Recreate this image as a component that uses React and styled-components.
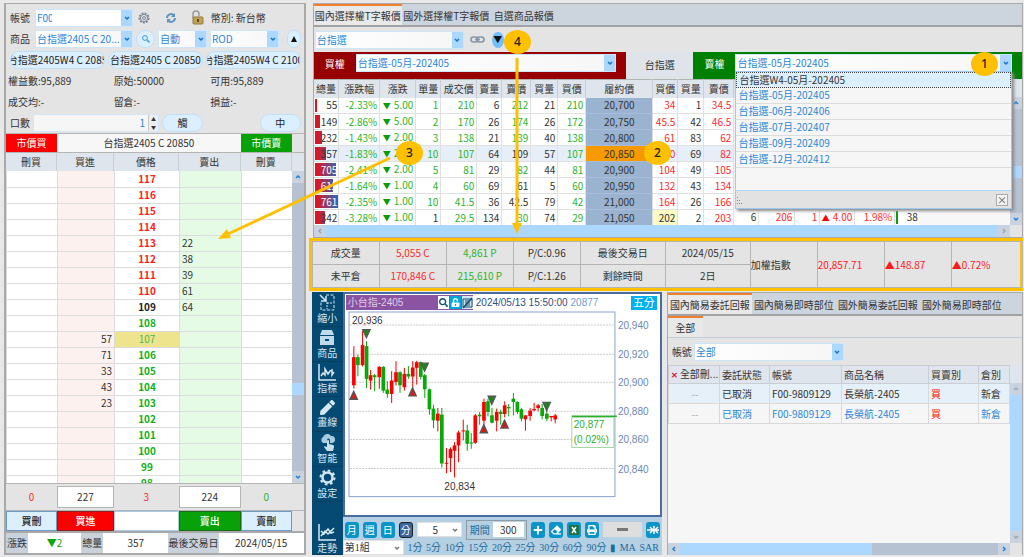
import React from "react";
import styled, { createGlobalStyle } from "styled-components";
import {
    FaSearch,
    FaPen,
    FaEraser,
    FaPrint,
    FaPlus,
    FaUnlockAlt,
} from "react-icons/fa";

const blue = "#2b86d9";
const red = "#ff2a2a";
const green = "#2bb52b";
const dark = "#333";

const GlobalStyle = createGlobalStyle`
  * {
    box-sizing: border-box;
  }

  body {
    margin: 0;
    background: #f3f3f3;
    color: ${dark};
    font-family: "Noto Sans CJK TC", "Noto Sans", sans-serif;
    font-size: 10px;
    line-height: 14px;
  }

  button, select, input {
    margin: 0;
    padding: 0;
    font: inherit;
    color: inherit;
    border-radius: 0;
  }

  table {
    width: 100%;
    border-collapse: collapse;
    table-layout: fixed;
  }

  th, td {
    padding: 0;
    font-weight: normal;
    white-space: nowrap;
    overflow: hidden;
  }
`;

const Page = styled.div`
  position: relative;
  display: grid;
  grid-template-columns: minmax(0, 30fr) minmax(0, 71fr);
  gap: 3px;
  min-height: 100vh;
  padding: 3px 1px 2px 4px;
  background: #e8e8e8;
  overflow: hidden;
`;

/* shared controls */

const ComboBox = styled.div`
  position: relative;
  display: flex;
  flex: ${(props) => props.$flex || "1"};
  min-width: 0;
  height: 18px;
  background: linear-gradient(90deg, #fff, #f6f6f6);
  border: 1px solid #cde6fb;
`;

const Select = styled.select`
  flex: 1;
  min-width: 0;
  padding-left: 1px;
  border: 0;
  outline: 0;
  appearance: none;
  background: transparent;
  color: ${blue};
  text-overflow: ellipsis;
`;

const ComboArrow = styled.span`
  display: flex;
  align-items: center;
  justify-content: center;
  width: 11px;
  background: #acd8ff;
  color: #1673cc;
  pointer-events: none;
`;

const Pill = styled.button`
  flex: ${(props) => props.$flex || "1"};
  min-width: 0;
  height: 18px;
  display: flex;
  align-items: center;
  justify-content: center;
  overflow: hidden;
  white-space: nowrap;
  border: 1px solid #bfe0fb;
  border-radius: 9px;
  background: #dcefff;
  color: #222;
`;

const IconButton = styled.button`
  flex: 0 0 16px;
  height: 16px;
  display: flex;
  align-items: center;
  justify-content: center;
  border: 0;
  background: none;
  color: ${(props) => props.$color || "#888"};
`;

const ScrollArrow = styled.button`
  flex: 0 0 12px;
  display: flex;
  align-items: center;
  justify-content: center;
  border: 0;
  background: #c9d3df;
  color: ${(props) => (props.$off ? "#9aa5b3" : "#1c7fd8")};
`;

const ScrollBar = styled.div`
  display: flex;
  flex-direction: ${(props) => (props.$vertical ? "column" : "row")};
  background: #b6c2d1;
  ${(props) => (props.$vertical ? "width: 12px;" : "height: 12px;")}
`;

const Thumb = styled.span`
  flex: ${(props) => props.$flex || "0 0 12px"};
  background: #acd8ff;
`;

const Track = styled.span`
  flex: ${(props) => props.$flex || "1"};
  background: ${(props) => props.$bg || "transparent"};
`;

const Chevron = ({ dir = "down" }) => {
    const points = {
        down: "1,2 3,4 5,2",
        up: "1,4 3,2 5,4",
        left: "4,1 2,3 4,5",
        right: "2,1 4,3 2,5",
    };
    return (
        <svg width="6" height="6" viewBox="0 0 6 6" fill="none" stroke="currentColor" strokeWidth="1.5">
            <polyline points={points[dir]} />
        </svg>
    );
};

const Combo = ({ id, label, value, flex, children }) => (
    <ComboBox $flex={flex}>
        <Select id={id} aria-label={label} defaultValue={value}>
            <option>{value}</option>
        </Select>
        <ComboArrow>
            <Chevron />
        </ComboArrow>
        {children}
    </ComboBox>
);

/* order ticket */

const Ticket = styled.section`
  display: flex;
  flex-direction: column;
  min-width: 0;
  padding-top: 3px;
  border: 2px solid #a9a9a9;
  border-top-width: 1px;
  background: #e4e4e4;
`;

const FormRow = styled.div`
  display: flex;
  align-items: center;
  gap: ${(props) => props.$gap || "3px"};
  height: 21px;
  padding: 0 3px 0 4px;
`;

const FormLabel = styled.label`
  flex: 0 0 22px;
  white-space: nowrap;
`;

const Currency = styled.span`
  flex: 0 0 92px;
  padding-left: 2px;
`;

const Account = styled.div`
  display: flex;
  flex: 0 0 98px;
`;

const AccountMask = styled.span`
  position: absolute;
  top: 0;
  bottom: 0;
  left: 16px;
  right: 11px;
  background: #fff;
`;

const Facts = styled.div`
  display: grid;
  grid-template-columns: 35fr 32fr 31fr;
  align-items: center;
  height: 21px;
  padding-left: 2px;
`;

const SpinBox = styled.div`
  display: flex;
  flex: 0 0 84px;
  height: 18px;
  border: 1px solid #d4e6f5;
  background: #f6f6f6;
`;

const SpinInput = styled.input`
  flex: 1;
  min-width: 0;
  padding-right: 3px;
  border: 0;
  background: transparent;
  color: ${blue};
  text-align: right;
`;

const SpinArrows = styled.span`
  display: grid;
  width: 10px;
  font-size: 5px;
  line-height: 8px;
  text-align: center;
  border-left: 1px solid #c8c8c8;
  background: #eee;
`;

const Spacer = styled.span`
  flex: 1;
`;

const LadderGrid = styled.div`
  display: grid;
  grid-template-columns: 51fr 57fr 65fr 62fr 51fr 12px;
  background: ${(props) => props.$bg || "transparent"};
  border-top: 1px solid #b5b5b5;
`;

const MarketButton = styled.button`
  height: 18px;
  border: 0;
  background: ${(props) => props.$bg};
  color: #fff;
`;

const ContractName = styled.div`
  grid-column: 2 / 5;
  line-height: 18px;
  text-align: center;
  background: #f7f7f7;
`;

const LadderHead = styled.div`
  line-height: 18px;
  text-align: center;
  background: #dfe5ec;
  border-right: 1px solid #c9ced6;
`;

const LadderBody = styled.div`
  display: flex;
  flex: 1 1 0;
  min-height: 0;
  overflow: hidden;
`;

const LadderScroll = styled.div`
  flex: 1;
  min-width: 0;
  overflow: hidden;
`;

const LadderTable = styled.table`
  td {
    height: 16px;
    border: 1px solid #dcdcdc;
    border-top: 0;
    background: #fff;
  }
`;

const BidCell = styled.td`
  && {
    padding-right: 2px;
    text-align: right;
    background: #fdf1f0;
  }
`;

const PriceCell = styled.td`
  && {
    text-align: center;
    font-weight: ${(props) => (props.$last ? "normal" : "bold")};
    color: ${(props) => props.$color};
    background: ${(props) => (props.$last ? "#eee48e" : "#fff")};
  }
`;

const AskCell = styled.td`
  && {
    padding-left: 2px;
    background: #e6fbe6;
  }
`;

const SumCell = styled.div`
  margin: 2px 0;
  line-height: 20px;
  text-align: center;
  color: ${(props) => props.$color || dark};
  background: ${(props) => (props.$box ? "#fff" : "transparent")};
  border: 1px solid ${(props) => (props.$box ? "#b5b5b5" : "transparent")};
`;

const TradeButton = styled.button`
  height: 20px;
  border: 1px solid ${(props) => props.$edge || "#6d9ac4"};
  background: ${(props) => props.$bg || "#dcefff"};
  color: ${(props) => props.$color || "#222"};
  font-weight: 500;
`;

const InfoBar = styled.div`
  display: grid;
  grid-template-columns: 22fr 53fr 22fr 65fr 50fr 85fr;
  text-align: center;
  line-height: 20px;
  border-top: 2px solid #a9a9a9;
`;

const InfoName = styled.span`
  white-space: nowrap;
  background: #c9d1db;
`;

const InfoValue = styled.span`
  background: #fff;
  color: ${(props) => props.$color || dark};
`;

/* option quotes */

const RightSide = styled.main`
  display: flex;
  flex-direction: column;
  min-width: 0;
`;

const QuotePanel = styled.section`
  margin-left: 4px;
  border: 1px solid #aaa;
  background: #e4e4e4;
`;

const TabBar = styled.nav`
  display: flex;
  height: 23px;
  background: #ccd4de;
  border-bottom: 2px solid #a3a3a3;
`;

const Tab = styled.button`
  padding: 0 1px;
  white-space: nowrap;
  border: 0;
  border-top: 2px solid ${(props) => (props.$active ? "#f08030" : "transparent")};
  background: ${(props) => (props.$active ? "#e9e9e9" : "transparent")};
  ${(props) => props.$fixed && `width: ${props.$fixed}; flex: none;`}
`;

const Toolbar = styled.div`
  display: flex;
  align-items: center;
  gap: 6px;
  height: 25px;
  padding-left: 1px;
`;

const ToolCombo = styled.div`
  display: flex;
  flex: 0 0 149px;
`;

const FoldButton = styled.button`
  width: 12px;
  height: 16px;
  border: 0;
  border-radius: 50%;
  background: #74bdff;
  color: #111;
  font-size: 9px;
  line-height: 12px;
`;

const SideBar = styled.div`
  display: grid;
  grid-template-columns: 312fr 67fr 328fr;
  height: 25px;
`;

const SideBlock = styled.div`
  display: flex;
  gap: 11px;
  padding: 2px 10px 5px 11px;
  background: ${(props) => props.$bg};
  color: #fff;
`;

const SideLabel = styled.label`
  line-height: 20px;
`;

const Underlying = styled.div`
  line-height: 25px;
  text-align: center;
  background: #dfe3ea;
`;

const Menu = styled.ul`
  position: absolute;
  z-index: 3;
  top: 100%;
  left: -1px;
  right: -1px;
  height: 138px;
  display: flex;
  flex-direction: column;
  margin: 0;
  padding: 0;
  list-style: none;
  background: #f6f6f6;
  border: 1px solid #9ccaf0;
  box-shadow: 2px 2px 3px #888;
`;

const MenuItem = styled.li`
  height: 16px;
  padding-left: 2px;
  color: ${(props) => (props.$active ? dark : blue)};
  background: ${(props) => (props.$active ? "#dcefff" : "transparent")};
  border: ${(props) => (props.$active ? "1px dotted #444" : "0 solid #ddd")};
  border-bottom-width: 1px;
`;

const MenuFoot = styled.li`
  display: flex;
  justify-content: space-between;
  align-items: center;
  height: 18px;
  margin-top: auto;
  padding-right: 3px;
  background: #e2e2e2;
  border-top: 1px solid #acd8ff;
`;

const CloseButton = styled.button`
  width: 12px;
  height: 12px;
  border: 1px solid #aaa;
  background: #f4f4f4;
  color: #555;
  line-height: 9px;
`;

const QuoteBody = styled.div`
  display: flex;
  margin-top: 2px;
`;

const QuoteClip = styled.div`
  flex: 1;
  min-width: 0;
  height: 146px;
  overflow: hidden;
  background: #f7f7f7;
`;

const QuoteTable = styled.table`
  th {
    height: 18px;
    background: #dfe5ec;
    border-right: 1px solid #c9ced6;
    border-top: 1px solid #b5b5b5;
  }
`;

const QuoteRow = styled.tr`
  background: ${(props) => (props.$active ? "#e6eff8" : "#fff")};
`;

const Td = styled.td`
  height: 16px;
  padding-right: 2px;
  text-align: right;
  color: ${(props) => props.$color || dark};
  background: ${(props) => props.$bg || "transparent"};
  border: 1px solid #e0e0e0;
  border-top: 0;
`;

const StrikeTd = styled.td`
  height: 16px;
  text-align: center;
  background: ${(props) => (props.$active ? "#f79a00" : "#9ab3d1")};
  border-bottom: 1px solid #a9bdd6;
`;

const BlankTd = styled.td`
  background: #f7f7f7;
`;

const VolumeTd = styled.td`
  position: relative;
  height: 16px;
  padding-right: 1px;
  text-align: right;
  border-bottom: 1px solid #e0e0e0;
`;

const VolumeBar = styled.span`
  position: absolute;
  top: 1px;
  bottom: 1px;
  left: 1px;
  background: ${(props) => props.$bg || "linear-gradient(90deg, #ec0f14, #1f6cc8) 0 0 / 24px 100%"};
`;

const VolumeText = styled.span`
  position: relative;
  color: ${(props) => (props.$light ? "#fff" : dark)};
`;

const Arrow = styled.span`
  margin-right: 3px;
  font-size: 8px;
  color: ${(props) => props.$color};
`;

/* summary */

const Summary = styled.section`
  border: 3px solid #ffc000;
  background: #e4e4e4;
`;

const SummaryTable = styled.table`
  td {
    height: 23px;
    text-align: center;
    border: 1px solid #b5b5b5;
  }

  td[rowspan] {
    text-align: left;
  }
`;

const Tint = styled.span`
  color: ${(props) => props.$color};
`;

/* bottom area */

const Bottom = styled.div`
  display: grid;
  grid-template-columns: minmax(0, 350fr) minmax(0, 356fr);
  flex: 1;
  gap: 5px;
  margin: 1px 0 0 3px;
`;

const ChartPanel = styled.section`
  display: flex;
  min-width: 0;
  background: #b4d0e2;
`;

const SideNav = styled.nav`
  flex: 0 0 31px;
  display: flex;
  flex-direction: column;
  background: #044a72;
`;

const NavButton = styled.button`
  height: ${(props) => (props.$last ? "32px" : "35px")};
  margin-top: ${(props) => (props.$last ? "auto" : "0")};
  display: flex;
  flex-direction: column;
  align-items: center;
  justify-content: center;
  gap: 1px;
  border: 0;
  border-bottom: 1px solid #0a3f60;
  background: none;
  color: #d5e8f5;
  font-size: 10px;
  line-height: 12px;
`;

const ChartMain = styled.div`
  flex: 1;
  display: flex;
  flex-direction: column;
  min-width: 0;
`;

const ChartFrame = styled.div`
  flex: 1;
  border: 2px solid #4c6ba5;
  background: #fff;
  font-family: "Liberation Sans", "Noto Sans CJK TC", sans-serif;
`;

const ChartHead = styled.div`
  display: flex;
  align-items: center;
  height: 17px;
  gap: 3px;
  padding: 0 1px;
  color: #2c4f86;
`;

const ChartTitle = styled.div`
  flex: 0 0 127px;
  display: flex;
  align-items: center;
  gap: 1px;
  height: 15px;
  padding-left: 2px;
  background: #8a54a2;
  color: #e0cfe8;
`;

const TitleText = styled.span`
  flex: 1;
`;

const TitleIcon = styled.button`
  width: 11px;
  height: 13px;
  display: flex;
  align-items: center;
  justify-content: center;
  border: 0;
  background: ${(props) => props.$bg || "#fff"};
  color: ${(props) => props.$color || "#0b4f78"};
  font-size: 9px;
`;

const Period = styled.span`
  margin-left: auto;
  margin-right: 2px;
  padding: 0 2px;
  line-height: 14px;
  font-size: 11px;
  background: #00b0f0;
  color: #fff;
`;

const ChartSvg = styled.svg`
  display: block;
  width: 100%;
`;

const ChartTools = styled.div`
  display: flex;
  align-items: center;
  gap: 4px;
  height: 21px;
  margin-top: 2px;
  padding: 0 2px;
`;

const ToolButton = styled.button`
  flex: 0 0 14px;
  height: 16px;
  display: flex;
  align-items: center;
  justify-content: center;
  border: ${(props) => (props.$active ? "1px solid #222" : "0")};
  border-radius: 3px;
  background: ${(props) => (props.$active ? "#38669f" : "#0c94c9")};
  color: #fff;
  font-size: 10px;
`;

const PlainCombo = styled.div`
  display: flex;
  align-items: center;
  flex: 0 0 ${(props) => props.$width};
  height: 15px;
  padding-right: 3px;
  background: #fff;
  border: 1px solid #e0e0e0;
  color: #777;
`;

const PlainSelect = styled(Select)`
  color: ${dark};
  text-align: ${(props) => (props.$center ? "center" : "left")};
`;

const Duration = styled.label`
  display: flex;
  align-items: center;
  justify-content: space-between;
  flex: 0 0 61px;
  height: 20px;
  padding: 0 2px 0 3px;
  border: 1px solid #8f9aa5;
  color: #2a6a96;
`;

const DurationInput = styled.input`
  width: 31px;
  height: 15px;
  border: 0;
  background: #fff;
  color: ${dark};
  text-align: center;
`;

const SliderBox = styled.div`
  flex: 1;
  display: flex;
  align-items: center;
  justify-content: center;
  height: 15px;
  background: #dedede;
`;

const SliderGrip = styled.span`
  width: 11px;
  height: 3px;
  background: #777;
`;

const MinuteBar = styled.div`
  display: flex;
  align-items: center;
  justify-content: space-between;
  height: 15px;
  padding-right: 3px;
  color: #206a9c;
  font-family: "Liberation Serif", "Noto Sans CJK TC", serif;
`;

const MinuteButton = styled.button`
  border: 0;
  background: none;
  white-space: nowrap;
`;

/* order report */

const OrderPanel = styled.section`
  display: flex;
  flex-direction: column;
  min-width: 0;
  border: 1px solid #aaa;
  border-bottom: 0;
  background: #e4e4e4;
`;

const SubTabs = styled.div`
  height: 22px;
  display: flex;
  border-bottom: 1px solid #c3ccd6;
`;

const OrderFilter = styled.div`
  display: flex;
  align-items: center;
  gap: 2px;
  height: 27px;
  padding-left: 4px;
`;

const FilterCombo = styled.div`
  display: flex;
  flex: 0 0 150px;
`;

const OrderBody = styled.div`
  flex: 1;
  display: flex;
  background: #f6f6f6;
`;

const OrderTable = styled.table`
  th {
    height: 18px;
    padding-left: 2px;
    text-align: left;
    background: #dfe5ec;
    border: 1px solid #c9ced6;
  }

  td {
    height: 20px;
    padding-left: 2px;
    border: 1px solid #d9d9d9;
  }
`;

const OrderRow = styled.tr`
  color: ${(props) => (props.$active ? dark : blue)};
  background: ${(props) => (props.$active ? "#e6f0f9" : "#f6f6f6")};
`;

const CancelButton = styled.button`
  width: 100%;
  border: 0;
  background: none;
  color: #aaa;
`;

const Cross = styled.span`
  margin-right: 2px;
  font-size: 8px;
  font-weight: bold;
  color: #e0103a;
`;

/* callouts */

const Callouts = styled.svg`
  position: absolute;
  z-index: 4;
  top: 0;
  left: 0;
  width: 100%;
  height: 100%;
  pointer-events: none;
`;

const Badge = styled.span`
  position: absolute;
  z-index: 5;
  top: ${(props) => props.$y}px;
  left: ${(props) => props.$x}px;
  width: 27px;
  height: 24px;
  border-radius: 50%;
  background: #ffc000;
  color: #222;
  font-family: "Noto Sans", sans-serif;
  font-size: 12px;
  font-weight: 500;
  line-height: 24px;
  text-align: center;
`;

const asks = { 113: 22, 112: 38, 111: 39, 110: 61, 109: 64 };
const bids = { 107: 57, 106: 71, 105: 33, 104: 43, 103: 23 };
const prices = Array.from({ length: 20 }, (_, i) => 117 - i);

const priceColor = (price) => {
    if (price === 107) return "#4db848";
    if (price === 109) return "#222";
    return price > 109 ? "#ff2020" : "#12b012";
};

const Ladder = () => (
    <LadderTable aria-label="價格">
        <colgroup>
            <col width="51" />
            <col width="57" />
            <col width="65" />
            <col width="62" />
            <col width="51" />
        </colgroup>
        <tbody>
            {prices.map((price) => (
                <tr key={price}>
                    <td />
                    <BidCell>{bids[price]}</BidCell>
                    <PriceCell $last={price === 107} $color={priceColor(price)}>
                        {price}
                    </PriceCell>
                    <AskCell>{asks[price]}</AskCell>
                    <td />
                </tr>
            ))}
        </tbody>
    </LadderTable>
);

const OrderTicket = () => (
    <Ticket>
        <FormRow>
            <FormLabel htmlFor="account">帳號</FormLabel>
            <Account>
                <Combo id="account" value="F00">
                    <AccountMask />
                </Combo>
            </Account>
            <IconButton aria-label="設定" $color="#7d8a99">
                <svg width="12" height="12" viewBox="0 0 12 12" fill="none" stroke="currentColor">
                    <circle cx="6" cy="6" r="4.6" strokeWidth="1.8" strokeDasharray="2 1.1" />
                    <circle cx="6" cy="6" r="3.6" />
                    <circle cx="6" cy="6" r="1.5" />
                </svg>
            </IconButton>
            <Spacer />
            <IconButton aria-label="更新" $color="#5b93c7">
                <svg width="12" height="12" viewBox="0 0 12 12" fill="none" stroke="currentColor" strokeWidth="2">
                    <path d="M2 6a4 4 0 0 1 7-2.5M10 6a4 4 0 0 1-7 2.5" />
                    <path d="M10 1v4H6zM2 11V7h4z" fill="currentColor" stroke="none" />
                </svg>
            </IconButton>
            <Spacer />
            <IconButton aria-label="鎖定">
                <svg width="13" height="15" viewBox="0 0 13 15">
                    <path d="M2 8V4a3 3 0 0 1 6 0v2" fill="none" stroke="#999" strokeWidth="1.5" />
                    <rect x="2" y="7" width="10" height="7" rx="1" fill="#c2a35c" stroke="#94793b" />
                    <rect x="6" y="9" width="2" height="3" fill="#5e4b1d" />
                </svg>
            </IconButton>
            <Currency>幣別: 新台幣</Currency>
        </FormRow>
        <FormRow>
            <FormLabel htmlFor="product">商品</FormLabel>
            <Combo id="product" value="台指選2405 C 20..." flex="0 0 98px" />
            <Pill $flex="0 0 19px" aria-label="搜尋">
                <svg width="8" height="8" viewBox="0 0 8 8" fill="none" stroke="#3b97e0">
                    <circle cx="3" cy="3" r="2.4" />
                    <path d="M5 5l2.5 2.5" strokeWidth="1.4" />
                </svg>
            </Pill>
            <Combo label="自動" value="自動" flex="0 0 49px" />
            <Combo label="委託條件" value="ROD" flex="0 0 69px" />
            <Spacer />
            <Pill $flex="0 0 14px" aria-label="收合">
                <svg width="8" height="8" viewBox="0 0 8 8" fill="#111">
                    <path d="M4 1l3 6H1z" />
                </svg>
            </Pill>
        </FormRow>
        <FormRow>
            <Pill>台指選2405W4 C 2085</Pill>
            <Pill>台指選2405 C 20850</Pill>
            <Pill>台指選2405W4 C 2100</Pill>
        </FormRow>
        <Facts>
            <span>權益數:95,889</span>
            <span>原始:50000</span>
            <span>可用:95,889</span>
        </Facts>
        <Facts>
            <span>成交均:-</span>
            <span>留倉:-</span>
            <span>損益:-</span>
        </Facts>
        <FormRow>
            <label htmlFor="lots">口數</label>
            <SpinBox>
                <SpinInput id="lots" defaultValue="1" />
                <SpinArrows>
                    <span>▲</span>
                    <span>▼</span>
                </SpinArrows>
            </SpinBox>
            <Pill $flex="0 0 41px">觸</Pill>
            <Spacer />
            <Pill $flex="0 0 41px">中</Pill>
        </FormRow>
        <LadderGrid>
            <MarketButton $bg="#fb0000">市價買</MarketButton>
            <ContractName>台指選2405 C 20850</ContractName>
            <MarketButton $bg="#08a208">市價賣</MarketButton>
        </LadderGrid>
        <LadderGrid $bg="#dfe5ec">
            <LadderHead>刪買</LadderHead>
            <LadderHead>買進</LadderHead>
            <LadderHead>價格</LadderHead>
            <LadderHead>賣出</LadderHead>
            <LadderHead>刪賣</LadderHead>
        </LadderGrid>
        <LadderBody>
            <LadderScroll>
                <Ladder />
            </LadderScroll>
            <ScrollBar $vertical>
                <ScrollArrow aria-label="上"><Chevron dir="up" /></ScrollArrow>
                <Track $flex="200" />
                <Thumb />
                <Track $flex="76" />
                <ScrollArrow aria-label="下"><Chevron /></ScrollArrow>
            </ScrollBar>
        </LadderBody>
        <LadderGrid>
            <SumCell $color={red}>0</SumCell>
            <SumCell $box>227</SumCell>
            <SumCell $color={red}>3</SumCell>
            <SumCell $box>224</SumCell>
            <SumCell $color={green}>0</SumCell>
        </LadderGrid>
        <LadderGrid>
            <TradeButton>買刪</TradeButton>
            <TradeButton $bg="#fb0000" $color="#fff" $edge="#8a2020">買進</TradeButton>
            <TradeButton $bg="#fff" $edge="#a9cbe8" aria-label="價格" />
            <TradeButton $bg="#08a208" $color="#fff" $edge="#1c6a1c">賣出</TradeButton>
            <TradeButton>賣刪</TradeButton>
        </LadderGrid>
        <InfoBar>
            <InfoName>漲跌</InfoName>
            <InfoValue $color="#12a512">▼2</InfoValue>
            <InfoName>總量</InfoName>
            <InfoValue>357</InfoValue>
            <InfoName>最後交易日</InfoName>
            <InfoValue>2024/05/15</InfoValue>
        </InfoBar>
    </Ticket>
);

// the columns past the put ask lie under the open month list
const quoteHead = [
    ["總量", 25], ["漲跌幅", 41], ["漲跌", 36], ["單量", 25], ["成交價", 36],
    ["賣量", 25], ["賣價", 29], ["買量", 27], ["買價", 28], ["履約價", 67],
    ["買價", 25], ["買量", 26], ["賣價", 30], ["", 25], ["", 36],
    ["", 25], ["", 35], ["", 40], ["", 24],
];

// volume, bar, change %, change, lot, last, ask size, ask, bid size, bid, strike, put bid, size, ask
const quotes = [
    [55, 2, "-2.33%", "5.00", 1, "210", 6, "212", 21, "210", "20,700", "34", 1, "34.5"],
    [149, 5, "-2.86%", "5.00", 2, "170", 26, "174", 26, "172", "20,750", "45.5", 42, "46.5"],
    [232, 7, "-1.43%", "2.00", 3, "138", 21, "139", 40, "138", "20,800", "61", 83, "62"],
    [357, 11, "-1.83%", "2.00", 10, "107", 64, "109", 57, "107", "20,850", "80", 69, "82"],
    [705, 21, "-2.41%", "2.00", 5, "81", 29, "82", 44, "81", "20,900", "104", 49, "105"],
    [612, 18, "-1.64%", "1.00", 4, "60", 69, "61", 5, "60", "20,950", "132", 43, "134"],
    [761, 23, "-2.35%", "1.00", 10, "41.5", 36, "42.5", 79, "42", "21,000", "164", 26, "166"],
    [342, 10, "-3.28%", "1.00", 1, "29.5", 134, "30", 74, "29", "21,050", "202", 2, "203"],
];

const darkAsks = ["109", "61", "42.5"];

const QuoteLine = ({ item }) => {
    const [vol, bar, pct, chg, lot, last, askSize, ask, bidSize, bid, strike, putBid, putSize, putAsk] = item;
    const active = strike === "20,850";
    const edge = strike === "21,050";

    return (
        <QuoteRow $active={active}>
            <VolumeTd>
                <VolumeBar style={{ width: bar }} />
                <VolumeText $light={bar > 15}>{vol}</VolumeText>
            </VolumeTd>
            <Td $color={green}>{pct}</Td>
            <Td $color={green}>
                <Arrow $color="#089c08">▼</Arrow>
                {chg}
            </Td>
            <Td $color={edge ? dark : green}>{lot}</Td>
            <Td $color={green}>{last}</Td>
            <Td>{askSize}</Td>
            <Td $color={darkAsks.includes(ask) ? dark : green}>{ask}</Td>
            <Td>{bidSize}</Td>
            <Td $color={green}>{bid}</Td>
            <StrikeTd $active={active}>{strike}</StrikeTd>
            <Td $color={edge ? dark : red} $bg={edge && "#fbfbc4"}>{putBid}</Td>
            <Td>{putSize}</Td>
            <Td $color={red}>{putAsk}</Td>
            {edge ? (
                <>
                    <Td>6</Td>
                    <Td $color={red}>206</Td>
                    <Td $color={red}>1</Td>
                    <Td $color={red}>
                        <Arrow $color="#ff0000">▲</Arrow>
                        4.00
                    </Td>
                    <Td $color={red}>1.98%</Td>
                    <VolumeTd>
                        <VolumeBar $bg="#0c9c0c" style={{ width: 2 }} />
                        38
                    </VolumeTd>
                    <BlankTd />
                </>
            ) : (
                <BlankTd colSpan="7" />
            )}
        </QuoteRow>
    );
};

const months = [
    "台指選W4-05月-202405",
    "台指選-05月-202405",
    "台指選-06月-202406",
    "台指選-07月-202407",
    "台指選-09月-202409",
    "台指選-12月-202412",
];

const OptionQuotes = () => (
    <QuotePanel>
        <TabBar>
            <Tab $active $fixed="88px">國內選擇權T字報價</Tab>
            <Tab $fixed="89px">國外選擇權T字報價</Tab>
            <Tab $fixed="66px">自選商品報價</Tab>
        </TabBar>
        <Toolbar>
            <ToolCombo>
                <Combo label="商品" value="台指選" />
            </ToolCombo>
            <IconButton aria-label="連結" $color="#8596a8">
                <svg width="15" height="9" viewBox="0 0 15 9" fill="none" stroke="currentColor" strokeWidth="1.6">
                    <rect x="1" y="2" width="7" height="5" rx="2.5" />
                    <rect x="7" y="2" width="7" height="5" rx="2.5" />
                    <path d="M5 4.5h5" />
                </svg>
            </IconButton>
            <FoldButton aria-label="展開">▼</FoldButton>
        </Toolbar>
        <SideBar>
            <SideBlock $bg="#960000">
                <SideLabel htmlFor="call">買權</SideLabel>
                <Combo id="call" value="台指選-05月-202405" />
            </SideBlock>
            <Underlying>台指選</Underlying>
            <SideBlock $bg="#008000">
                <SideLabel htmlFor="put">賣權</SideLabel>
                <Combo id="put" value="台指選-05月-202405">
                    <Menu role="listbox" aria-label="月份">
                        {months.map((month, i) => (
                            <MenuItem key={month} role="option" $active={i === 0}>
                                {month}
                            </MenuItem>
                        ))}
                        <MenuFoot>
                            <svg width="8" height="10" viewBox="0 0 8 10" fill="#888">
                                <path d="M1 2h1v1H1zM1 5h1v1H1zM3 5h1v1H3zM1 8h1v1H1zM3 8h1v1H3zM5 8h1v1H5z" />
                            </svg>
                            <CloseButton aria-label="關閉">×</CloseButton>
                        </MenuFoot>
                    </Menu>
                </Combo>
            </SideBlock>
        </SideBar>
        <QuoteBody>
            <QuoteClip>
                <QuoteTable>
                    <colgroup>
                        {quoteHead.map(([, width], i) => (
                            <col key={i} width={width} />
                        ))}
                        <col />
                    </colgroup>
                    <thead>
                        <tr>
                            {quoteHead.map(([name], i) => (
                                <th key={i}>{name}</th>
                            ))}
                            <th />
                        </tr>
                    </thead>
                    <tbody>
                        {quotes.map((item) => (
                            <QuoteLine key={item[10]} item={item} />
                        ))}
                    </tbody>
                </QuoteTable>
            </QuoteClip>
            <ScrollBar $vertical>
                <Track $flex="0 0 18px" $bg="#dfe5ec" />
                <ScrollArrow aria-label="上"><Chevron dir="up" /></ScrollArrow>
                <Track $flex="56" />
                <Thumb />
                <Track $flex="34" />
                <ScrollArrow aria-label="下"><Chevron /></ScrollArrow>
            </ScrollBar>
        </QuoteBody>
        <ScrollBar>
            <ScrollArrow $off aria-label="左"><Chevron dir="left" /></ScrollArrow>
            <Thumb $flex="1" />
            <ScrollArrow $off aria-label="右"><Chevron dir="right" /></ScrollArrow>
            <Track $flex="0 0 12px" $bg="#e4e4e4" />
        </ScrollBar>
    </QuotePanel>
);

const MarketSummary = () => (
    <Summary>
        <SummaryTable>
            <colgroup>
                {[67, 67, 67, 67, 85, 85, 67, 67, 67, 71].map((width, i) => (
                    <col key={i} width={width} />
                ))}
            </colgroup>
            <tbody>
                <tr>
                    <td>成交量</td>
                    <td><Tint $color={red}>5,055 C</Tint></td>
                    <td><Tint $color={green}>4,861 P</Tint></td>
                    <td>P/C:0.96</td>
                    <td>最後交易日</td>
                    <td>2024/05/15</td>
                    <td rowSpan="2">加權指數</td>
                    <td rowSpan="2"><Tint $color="#ff1a1a">20,857.71</Tint></td>
                    <td rowSpan="2"><Tint $color="#ff1a1a">▲148.87</Tint></td>
                    <td rowSpan="2"><Tint $color="#ff1a1a">▲0.72%</Tint></td>
                </tr>
                <tr>
                    <td>未平倉</td>
                    <td><Tint $color={red}>170,846 C</Tint></td>
                    <td><Tint $color={green}>215,610 P</Tint></td>
                    <td>P/C:1.26</td>
                    <td>剩餘時間</td>
                    <td>2日</td>
                </tr>
            </tbody>
        </SummaryTable>
    </Summary>
);

// x, high, open/close top, open/close bottom, low, direction
const candles = [
    [140, 165, 198, 282, 292, 1], [152, 190, 198, 222, 255, 0], [166, 120, 162, 222, 226, 1],
    [178, 150, 165, 263, 290, 0], [190, 236, 252, 268, 295, 1], [202, 248, 252, 258, 300, 0],
    [216, 225, 227, 258, 293, 1], [228, 225, 227, 298, 305, 0], [240, 270, 295, 308, 320, 0],
    [253, 240, 268, 308, 335, 1], [266, 210, 243, 272, 283, 1], [278, 240, 243, 282, 305, 0],
    [291, 230, 248, 288, 298, 1], [303, 225, 248, 256, 263, 0], [316, 210, 229, 256, 290, 1],
    [328, 209, 213, 230, 280, 1], [340, 211, 213, 257, 265, 0], [352, 248, 252, 294, 320, 0],
    [366, 292, 294, 354, 370, 0], [378, 340, 352, 387, 410, 0], [391, 350, 367, 388, 420, 1],
    [403, 350, 370, 516, 528, 0], [417, 470, 514, 517, 545, 1], [429, 468, 473, 500, 542, 1],
    [441, 452, 462, 478, 558, 1], [453, 418, 423, 462, 512, 1], [467, 385, 417, 420, 447, 1],
    [479, 400, 417, 457, 478, 0], [491, 425, 453, 456, 472, 0], [503, 368, 372, 454, 458, 1],
    [516, 362, 370, 375, 400, 0], [529, 322, 332, 388, 400, 1], [541, 322, 330, 362, 375, 0],
    [553, 350, 372, 394, 396, 0], [567, 352, 362, 388, 420, 1], [579, 355, 362, 368, 400, 0],
    [591, 330, 342, 368, 378, 1], [603, 338, 347, 351, 375, 0], [617, 305, 322, 332, 372, 0],
    [629, 330, 332, 362, 368, 0], [641, 350, 354, 382, 390, 0], [653, 372, 372, 384, 418, 1],
    [667, 350, 358, 374, 388, 1], [679, 335, 353, 357, 360, 1], [691, 338, 342, 350, 360, 1],
    [703, 338, 350, 374, 384, 0], [717, 355, 367, 382, 390, 0], [730, 374, 374, 378, 390, 1],
    [742, 368, 372, 384, 396, 1],
];

const peaks = [[178, 128], [352, 228], [553, 327], [717, 345]];
const troughs = [[140, 312], [316, 302], [529, 412], [591, 398]];
const levels = ["20,940", "20,920", "20,900", "20,880", "20,860", "20,840"];

const CandleChart = () => (
    <ChartSvg viewBox="0 0 314 188" role="img" aria-label="小台指-2405">
        <rect x="4" y="1" width="265" height="184" fill="#fff" stroke="#8aa2cc" />
        {levels.map((level, i) => (
            <g key={level}>
                <path d={`M5 ${14 + Math.round(i * 28.5)}H269`} stroke="#ccc" strokeDasharray="2 1" />
                <text x="272" y={18 + Math.round(i * 28.5)} fontSize="10" fill="#6f86b4">
                    {level}
                </text>
            </g>
        ))}
        <g transform="translate(-38 -20) scale(0.3333)">
            {candles.map(([x, high, top, bottom, low, up]) => (
                <g key={x} fill={up ? "#fb0000" : "#08a808"}>
                    <rect x={x - 1} y={high} width="3" height={low - high} />
                    <rect x={x - 5} y={top} width="11" height={bottom - top} />
                </g>
            ))}
            {peaks.map(([x, y]) => (
                <path key={x} d={`M${x - 11} ${y - 12}h22l-11 24z`} fill="#178a17" stroke="#555" strokeWidth="4" />
            ))}
            {troughs.map(([x, y]) => (
                <path key={x} d={`M${x - 11} ${y + 12}h22l-11 -24z`} fill="#e01818" stroke="#555" strokeWidth="4" />
            ))}
        </g>
        <text x="7" y="13" fontSize="10" fill="#333">20,936</text>
        <text x="99" y="178" fontSize="10" fill="#333">20,834</text>
        <rect x="226" y="106" width="42" height="30" fill="#fff" stroke="#9fd79f" />
        <path d="M226 105h45" stroke="#2eb02e" strokeWidth="1.5" />
        <text x="228" y="117" fontSize="10" fill="#2eb02e">20,877</text>
        <text x="228" y="132" fontSize="10" fill="#2eb02e">(0.02%)</text>
    </ChartSvg>
);

const TrendIcon = () => (
    <svg width="18" height="17" viewBox="0 0 18 17" fill="none" stroke="currentColor" strokeWidth="1.5">
        <path d="M1 0v16h17" />
        <path d="M3 12l4-5 3 3 6-6M3 7l3 3 4-5 3 4 3-1" />
    </svg>
);

const navItems = [
    ["縮小", (
        <svg width="16" height="17" viewBox="0 0 16 17" fill="none" stroke="currentColor">
            <path d="M7 1h8v15H2V8" strokeDasharray="3 1.5" />
            <path d="M1 1l6 6M7 2v5H2" strokeWidth="1.5" />
            <path d="M8 8v7M8 9h6" strokeDasharray="2 1" />
        </svg>
    )],
    ["商品", (
        <svg width="16" height="17" viewBox="0 0 16 17" fill="#c0d9ea">
            <path d="M3 1h10l2 5H1z" />
            <path d="M1 7h14v9H1z" />
            <path d="M6 10h4v2H6z" fill="#044a72" />
        </svg>
    )],
    ["指標", (
        <svg width="18" height="17" viewBox="0 0 18 17" fill="none" stroke="currentColor" strokeWidth="1.5">
            <path d="M1 0v16h17" />
            <path d="M3 12l2-3 2 2V5l3 5 2-3 2-1v5l2-3" />
        </svg>
    )],
    ["畫線", <FaPen size="15" />],
    ["智能", (
        <svg width="16" height="17" viewBox="0 0 16 17" fill="#a9cbe1">
            <path d="M4 9a3.5 3.5 0 0 1 0-6 4.5 4.5 0 0 1 8-1 3.5 3.5 0 0 1 1 7h-2V6a1.5 1.5 0 0 0-3 0v3z" />
            <path d="M9 6c1 0 1 1 1 1v3l4 1c1 0 1 1 1 2l-1 4H8l-3-4c0-1 1-1 3 0V7c0-1 1-1 1-1z" fill="#c9dfee" />
        </svg>
    )],
    ["設定", (
        <svg width="17" height="17" viewBox="0 0 17 17" fill="none" stroke="currentColor">
            <circle cx="8.5" cy="8.5" r="5" strokeWidth="2.5" />
            <circle cx="8.5" cy="8.5" r="7" strokeWidth="2" strokeDasharray="2.7 2.8" />
        </svg>
    )],
];

const minutes = ["1分", "5分", "10分", "15分", "20分", "25分", "30分", "60分", "90分", "▮", "MA", "SAR"];

const KLine = () => (
    <ChartPanel>
        <SideNav>
            {navItems.map(([name, icon]) => (
                <NavButton key={name}>
                    {icon}
                    {name}
                </NavButton>
            ))}
            <NavButton $last>
                <TrendIcon />
                走勢
            </NavButton>
        </SideNav>
        <ChartMain>
            <ChartFrame>
                <ChartHead>
                    <ChartTitle>
                        <TitleText>小台指-2405</TitleText>
                        <TitleIcon aria-label="搜尋"><FaSearch /></TitleIcon>
                        <TitleIcon aria-label="鎖定" $bg="#00a5dc" $color="#fff"><FaUnlockAlt /></TitleIcon>
                        <TitleIcon aria-label="編輯" $bg="#d8e4ec">
                            <svg width="11" height="12" viewBox="0 0 11 12" fill="none" stroke="currentColor">
                                <path d="M1 2h9v8H1zM3 4h5M3 6h5M3 8h5" />
                                <path d="M1 11L10 1" strokeWidth="1.5" />
                            </svg>
                        </TitleIcon>
                    </ChartTitle>
                    <span>2024/05/13 15:50:00</span>
                    <Tint $color="#6d9fcc">20877</Tint>
                    <Period>五分</Period>
                </ChartHead>
                <CandleChart />
            </ChartFrame>
            <ChartTools>
                <ToolButton>月</ToolButton>
                <ToolButton>週</ToolButton>
                <ToolButton>日</ToolButton>
                <ToolButton $active>分</ToolButton>
                <PlainCombo $width="45px">
                    <PlainSelect aria-label="分鐘" $center defaultValue="5">
                        <option>5</option>
                    </PlainSelect>
                    <Chevron />
                </PlainCombo>
                <Duration>
                    期間
                    <DurationInput defaultValue="300" />
                </Duration>
                <ToolButton aria-label="新增"><FaPlus /></ToolButton>
                <ToolButton aria-label="清除"><FaEraser /></ToolButton>
                <ToolButton aria-label="Excel">
                    <svg width="10" height="10" viewBox="0 0 10 10">
                        <rect width="10" height="10" rx="1" fill="#1d7044" />
                        <path d="M3 2l4 6M7 2L3 8" stroke="#fff" strokeWidth="1.5" />
                    </svg>
                </ToolButton>
                <ToolButton aria-label="列印"><FaPrint /></ToolButton>
                <SliderBox>
                    <SliderGrip />
                </SliderBox>
                <ToolButton aria-label="最新">
                    <svg width="12" height="8" viewBox="0 0 12 8" fill="none" stroke="#fff" strokeWidth="1.5">
                        <path d="M0 4h12M7 0v8M3 1l3 3-3 3M11 1L8 4l3 3" />
                    </svg>
                </ToolButton>
            </ChartTools>
            <MinuteBar>
                <PlainCombo $width="61px">
                    <PlainSelect aria-label="組別" defaultValue="第1組">
                        <option>第1組</option>
                    </PlainSelect>
                    <Chevron />
                </PlainCombo>
                {minutes.map((name) => (
                    <MinuteButton key={name}>{name}</MinuteButton>
                ))}
            </MinuteBar>
        </ChartMain>
    </ChartPanel>
);

const OrderReport = () => (
    <OrderPanel>
        <TabBar>
            <Tab $active $fixed="84px">國內簡易委託回報</Tab>
            <Tab $fixed="84px">國內簡易即時部位</Tab>
            <Tab $fixed="84px">國外簡易委託回報</Tab>
            <Tab $fixed="84px">國外簡易即時部位</Tab>
        </TabBar>
        <SubTabs>
            <Tab $active $fixed="35px">全部</Tab>
        </SubTabs>
        <OrderFilter>
            <label htmlFor="report-account">帳號</label>
            <FilterCombo>
                <Combo id="report-account" value="全部" />
            </FilterCombo>
        </OrderFilter>
        <OrderBody>
            <LadderScroll>
                <OrderTable>
                    <colgroup>
                        {[51, 50, 72, 87, 50, 31].map((width, i) => (
                            <col key={i} width={width} />
                        ))}
                    </colgroup>
                    <thead>
                        <tr>
                            <th><Cross>✕</Cross>全部刪...</th>
                            <th>委託狀態</th>
                            <th>帳號</th>
                            <th>商品名稱</th>
                            <th>買賣別</th>
                            <th>倉別</th>
                        </tr>
                    </thead>
                    <tbody>
                        {[true, false].map((active) => (
                            <OrderRow key={String(active)} $active={active}>
                                <td><CancelButton>--</CancelButton></td>
                                <td>已取消</td>
                                <td>F00-9809129</td>
                                <td>長榮航-2405</td>
                                <td><Tint $color="#ff0000">買</Tint></td>
                                <td>新倉</td>
                            </OrderRow>
                        ))}
                    </tbody>
                </OrderTable>
            </LadderScroll>
            <ScrollBar $vertical>
                <Track $flex="0 0 18px" $bg="#dfe5ec" />
                <ScrollArrow $off aria-label="上"><Chevron dir="up" /></ScrollArrow>
                <Thumb $flex="1" />
                <ScrollArrow $off aria-label="下"><Chevron /></ScrollArrow>
            </ScrollBar>
        </OrderBody>
        <ScrollBar>
            <ScrollArrow aria-label="左"><Chevron dir="left" /></ScrollArrow>
            <Thumb $flex="193" />
            <Track $flex="126" />
            <ScrollArrow aria-label="右"><Chevron dir="right" /></ScrollArrow>
            <Track $flex="0 0 12px" $bg="#e4e4e4" />
        </ScrollBar>
    </OrderPanel>
);

const badges = [
    [1, 971, 52],
    [2, 644, 141],
    [3, 396, 141],
    [4, 504, 30],
];

const App = () => (
    <>
        <GlobalStyle />
        <Page>
            <OrderTicket />
            <RightSide>
                <OptionQuotes />
                <MarketSummary />
                <Bottom>
                    <KLine />
                    <OrderReport />
                </Bottom>
            </RightSide>
            <Callouts fill="#ffc000" stroke="none">
                <path d="M517 58V224" stroke="#ffc000" strokeWidth="3" />
                <path d="M512 223h10l-5 11z" />
                <path d="M390 158L228 234" stroke="#ffc000" strokeWidth="3" />
                <path d="M218 239l9-10 4 9z" />
            </Callouts>
            {badges.map(([name, x, y]) => (
                <Badge key={name} $x={x} $y={y}>{name}</Badge>
            ))}
        </Page>
    </>
);

export default App;
